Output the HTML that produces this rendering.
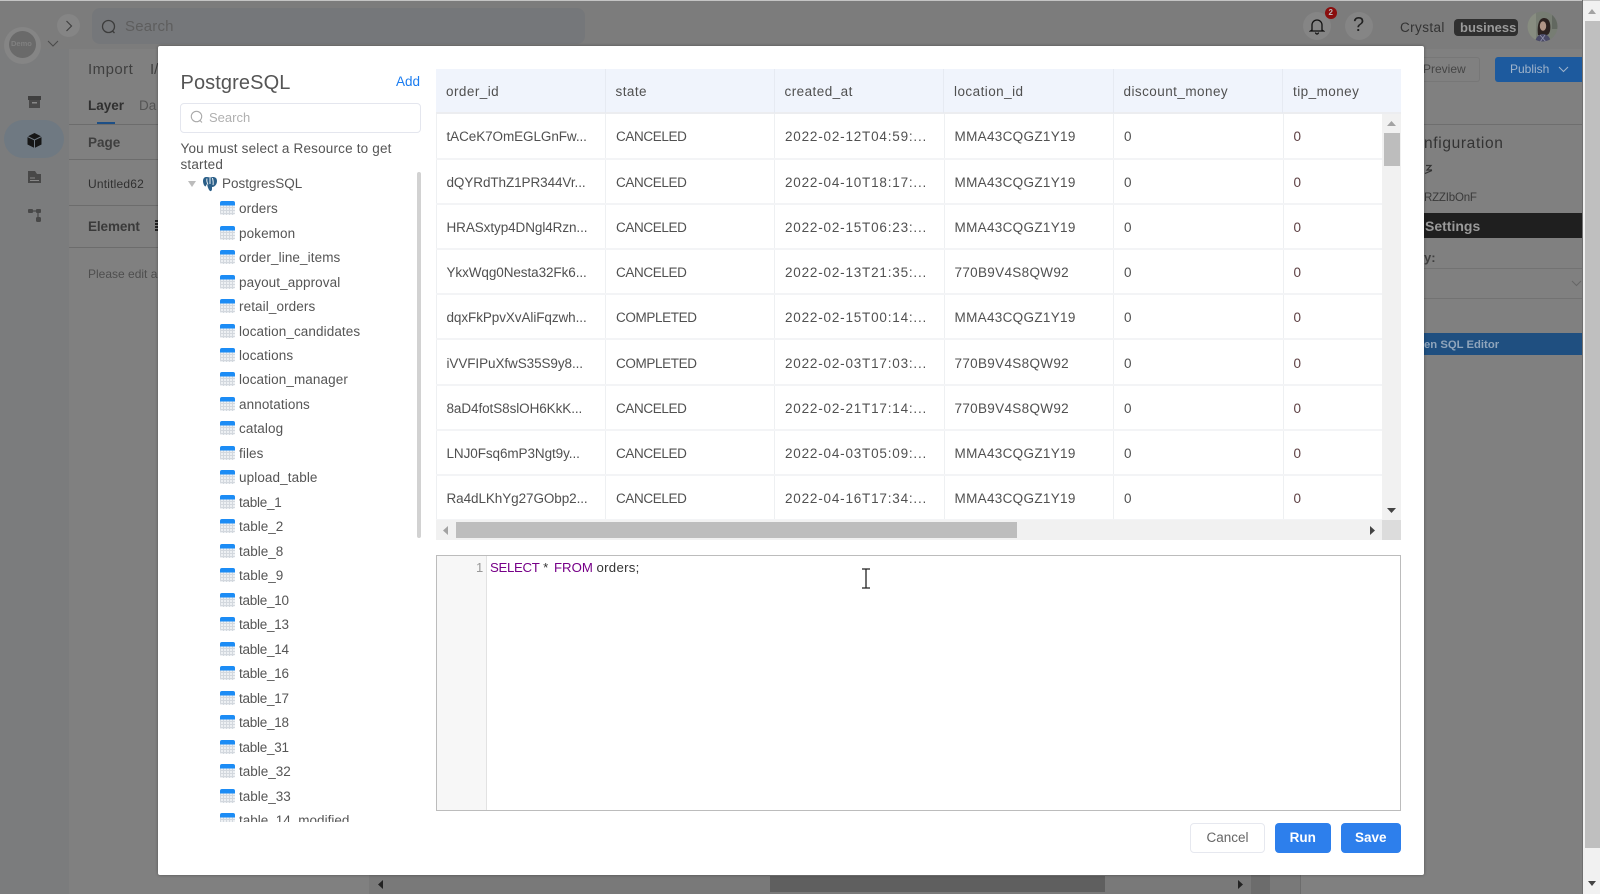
<!DOCTYPE html>
<html><head><meta charset="utf-8"><style>
*{box-sizing:border-box}
html,body{margin:0;padding:0;width:1600px;height:894px;overflow:hidden;background:#808080}
body{font-family:"Liberation Sans",sans-serif;position:relative}
#w{position:absolute;left:0;top:0;width:1600px;height:894px;overflow:hidden;filter:blur(.35px)}
.a{position:absolute;white-space:nowrap;line-height:1}
.b{position:absolute}
.bgt{color:#3f3f3f}
.tr{height:24.49px;line-height:24.49px;padding-left:62px;position:relative;font-size:13.5px;color:#555;white-space:nowrap;letter-spacing:.1px}
.tr:before{content:"";position:absolute;left:43px;top:4px;width:15px;height:14px;border-radius:2px;background:linear-gradient(#1c8cf5 0,#1c8cf5 4.5px,transparent 4.5px),repeating-linear-gradient(90deg,#d3d8de 0,#d3d8de 1px,transparent 1px,transparent 3px),repeating-linear-gradient(#d3d8de 0,#d3d8de 1px,#edf0f3 1px,#edf0f3 3px)}
.n1{letter-spacing:-.25px}.n2{letter-spacing:0}
table{border-collapse:collapse;table-layout:fixed;position:absolute;left:435.5px;top:113.5px;width:946.5px;font-size:13.5px;color:#505050}
td{height:45.2px;padding:2px 0 0 10px;border-right:1px solid #eef0f2;border-bottom:2px solid #f3f4f6;white-space:nowrap;overflow:hidden}
td:first-child{border-left:1px solid #eef0f2;padding-left:10px;letter-spacing:-.08px}
td:nth-child(2){letter-spacing:-.38px}
td:nth-child(3){letter-spacing:.8px}
td:nth-child(4){letter-spacing:.32px}
td:last-child{border-right:0;color:#5c3f42}
.h{position:absolute;top:69px;height:44px;line-height:45px;font-size:13.5px;color:#505050;padding-left:10px;border-right:1px solid #e6eaf2;letter-spacing:.45px}
</style></head><body><div id="w">
<!-- background app -->
<div class="b" style="left:0;top:0;width:1600px;height:1px;background:#c4c4c4"></div>
<div class="b" style="left:0;top:1px;width:69px;height:893px;background:#7b7c7d"></div>
<div class="b" style="left:0;top:1px;width:1583px;height:48px;background:#7c7c7c"></div>
<div class="b" style="left:4px;top:27px;width:37px;height:37px;border-radius:50%;background:#858585"></div>
<div class="b" style="left:9px;top:31px;width:27px;height:27px;border-radius:50%;background:#6a6a6a"></div>
<div class="a" style="left:11px;top:40px;font-size:7.5px;font-weight:bold;color:#808080">Demo</div>
<svg class="b" style="left:47px;top:40px" width="12" height="8"><path d="M1 1l5 5 5-5" fill="none" stroke="#4a4a4a" stroke-width="1"/></svg>
<div class="b" style="left:57px;top:14px;width:23px;height:23px;border-radius:50%;background:#858585"></div>
<svg class="b" style="left:65px;top:20px" width="8" height="12"><path d="M1.5 1l5 5-5 5" fill="none" stroke="#404040" stroke-width="1.2"/></svg>
<div class="b" style="left:92px;top:8px;width:493px;height:36px;border-radius:8px;background:#75777a"></div>
<svg class="b" style="left:101px;top:19px" width="16" height="16"><circle cx="7.5" cy="7.5" r="6" fill="none" stroke="#3c3c3c" stroke-width="1.3"/><path d="M11.5 12l2 2" stroke="#3c3c3c" stroke-width="1.3"/></svg>
<div class="a" style="left:125px;top:19px;font-size:15px;color:#5e5e5e;letter-spacing:.2px">Search</div>
<div class="a bgt" style="left:88px;top:62px;font-size:15px;letter-spacing:.45px">Import</div>
<div class="a bgt" style="left:150px;top:62px;font-size:15px">I/</div>
<div class="a" style="left:88px;top:99px;font-size:13.5px;font-weight:bold;color:#303030">Layer</div>
<div class="a" style="left:139px;top:99px;font-size:13.5px;color:#555">Da</div>
<div class="b" style="left:97px;top:122px;width:18px;height:2px;background:#1d4f86"></div>
<div class="b" style="left:69px;top:124px;width:90px;height:1px;background:#6c6c6c"></div>
<div class="a bgt" style="left:88px;top:136px;font-size:13.5px;font-weight:bold">Page</div>
<div class="b" style="left:69px;top:159px;width:90px;height:1px;background:#6c6c6c"></div>
<div class="a" style="left:88px;top:178px;font-size:12px;color:#303030;letter-spacing:.2px">Untitled62</div>
<div class="b" style="left:69px;top:205px;width:90px;height:1px;background:#6c6c6c"></div>
<div class="a" style="left:88px;top:220px;font-size:13.5px;font-weight:bold;color:#3a3a3a;letter-spacing:-.1px">Element</div>
<div class="b" style="left:155px;top:220px;width:2.5px;height:12px;background:repeating-linear-gradient(#222 0,#222 2px,transparent 2px,transparent 3px)"></div>
<div class="b" style="left:69px;top:247px;width:90px;height:1px;background:#6c6c6c"></div>
<div class="a" style="left:88px;top:268px;font-size:12px;color:#4e4e4e">Please edit a</div>
<!-- sidebar icons -->
<div class="b" style="left:4px;top:120px;width:60px;height:38px;border-radius:19px;background:#6f7982"></div>
<svg class="b" style="left:26px;top:94px" width="16" height="16"><rect x="2" y="2" width="13" height="4" fill="#3f3f3f"/><rect x="3" y="6" width="11" height="8" fill="#4a4a4a"/><rect x="6" y="8" width="5" height="1.5" fill="#888"/></svg>
<svg class="b" style="left:26px;top:132px" width="17" height="17"><path d="M8.5 1L15.5 4.5V12.5L8.5 16L1.5 12.5V4.5Z" fill="#161616"/><path d="M1.500 4.500L8.500 8L15.500 4.500M8.500 8V16" fill="none" stroke="#6f7982" stroke-width="1"/></svg>
<svg class="b" style="left:26px;top:169px" width="16" height="16"><path d="M2 2h7l2 3h4v9H2z" fill="#484848"/><path d="M4 9h5M4 11.500h9" stroke="#888" stroke-width="1"/></svg>
<svg class="b" style="left:26px;top:207px" width="16" height="16"><rect x="2" y="2" width="5" height="4" rx="1" fill="#484848"/><rect x="10" y="2" width="5" height="4" rx="1" fill="#484848"/><rect x="10" y="10" width="5" height="5" rx="1.500" fill="#484848"/><path d="M7 4h3M12 6v4" stroke="#484848" stroke-width="1.200"/></svg>
<!-- top right -->
<div class="b" style="left:1303px;top:12px;width:28px;height:28px;border-radius:50%;background:#858585"></div>
<div class="b" style="left:1345px;top:12px;width:28px;height:28px;border-radius:50%;background:#858585"></div>
<svg class="b" style="left:1309px;top:17px" width="16" height="18"><path d="M3 13V8a5 5 0 0 1 10 0v5l1.500 1h-13z" fill="none" stroke="#111" stroke-width="1.300"/><path d="M6.500 15.500a1.500 1.500 0 0 0 3 0" fill="none" stroke="#111" stroke-width="1.200"/></svg>
<div class="b" style="left:1325px;top:7px;width:12px;height:12px;border-radius:50%;background:#8a0e0e"></div>
<div class="a" style="left:1328.500px;top:9px;font-size:8px;font-weight:bold;color:#bbb">2</div>
<div class="a" style="left:1353px;top:15px;font-size:20px;color:#222">?</div>
<div class="a" style="left:1400px;top:21px;font-size:13.500px;color:#333;letter-spacing:.4px">Crystal</div>
<div class="b" style="left:1454px;top:19px;width:64px;height:17px;border-radius:4px;background:#2f2f2f"></div>
<div class="a" style="left:1460px;top:21px;font-size:13px;font-weight:bold;color:#9a9a9a">business</div>
<svg class="b" style="left:1527px;top:11px" width="31" height="31"><defs><clipPath id="av"><circle cx="15.500" cy="15.500" r="15"/></clipPath></defs><g clip-path="url(#av)"><rect width="31" height="31" fill="#777d73"/><rect x="0" y="0" width="9" height="31" fill="#878c80"/><rect x="25" y="4" width="6" height="14" fill="#626860"/><path d="M11 24c-1-7 0-17 6-17s7 7 6 13c-1 3-2 4-4 4z" fill="#2c2220"/><ellipse cx="16" cy="15" rx="3.200" ry="4.800" fill="#b09586"/><path d="M8 31c1-5 4-8 8-8s7 3 8 8z" fill="#4a4a66"/><path d="M13 24l6 7M18 24l-5 7" stroke="#9a9ab4" stroke-width=".7"/></g></svg>
<div class="b" style="left:1424px;top:57px;width:56px;height:25px;border:1px solid #777;border-left:0;border-radius:0 3px 3px 0"></div>
<div class="a" style="left:1423px;top:63px;font-size:12px;color:#454545">Preview</div>
<div class="b" style="left:1495px;top:57px;width:87px;height:25px;border-radius:3px 0 0 3px;background:#1d5a9e"></div>
<div class="a" style="left:1510px;top:63px;font-size:12px;color:#a0b4cb">Publish</div>
<svg class="b" style="left:1558px;top:66px" width="11" height="7"><path d="M1 1l4.500 4.500L10 1" fill="none" stroke="#a0b4cb" stroke-width="1"/></svg>
<div class="b" style="left:1424px;top:124px;width:158px;height:1px;background:#6e6e6e"></div>
<div class="a" style="left:1424px;top:136px;font-size:15.500px;letter-spacing:.65px;color:#333">nfiguration</div>
<svg class="b" style="left:1424px;top:164px" width="9" height="11"><path d="M2 1.500h5L3 6h5M1 9.500l7-3" fill="none" stroke="#333" stroke-width="1.200"/></svg>
<div class="a" style="left:1424px;top:193px;font-size:11.500px;color:#3a3a3a;letter-spacing:-.2px">RZZIbOnF</div>
<div class="b" style="left:1424px;top:213px;width:158px;height:25px;background:#1f1f1f"></div>
<div class="a" style="left:1425px;top:219px;font-size:14px;font-weight:bold;color:#999">Settings</div>
<div class="a bgt" style="left:1424px;top:251px;font-size:13px;font-weight:bold">y:</div>
<div class="b" style="left:1424px;top:268px;width:158px;height:1px;background:#727272"></div>
<svg class="b" style="left:1571px;top:280px" width="11" height="7"><path d="M1 1l4.500 4.500L10 1" fill="none" stroke="#666" stroke-width="1"/></svg>
<div class="b" style="left:1424px;top:298px;width:158px;height:1px;background:#727272"></div>
<div class="b" style="left:1424px;top:333px;width:158px;height:22px;background:#1f4f80"></div>
<div class="a" style="left:1424px;top:339.500px;font-size:11.300px;font-weight:bold;color:#90a5bb">en SQL Editor</div>
<!-- page scrollbar -->
<div class="b" style="left:1582px;top:0;width:1px;height:894px;background:#6e6e6e"></div>
<div class="b" style="left:1583px;top:1px;width:17px;height:893px;background:#f1f1f1"></div>
<div class="b" style="left:1585px;top:21px;width:15px;height:827px;background:#bfbfbf"></div>
<svg class="b" style="left:1587px;top:8px" width="10" height="7"><path d="M1 6h8L5 1z" fill="#a3a3a3"/></svg>
<svg class="b" style="left:1587px;top:880px" width="10" height="7"><path d="M1 1h8L5 6z" fill="#444"/></svg>
<!-- bottom scrollbar -->
<div class="b" style="left:369px;top:875px;width:931px;height:19px;background:#797979"></div>
<div class="b" style="left:770px;top:876px;width:335px;height:16px;background:#5f5f5f"></div>
<div class="b" style="left:1251px;top:875px;width:19px;height:19px;background:#6c6c6c"></div>
<div class="b" style="left:1300px;top:875px;width:1px;height:19px;background:#6c6c6c"></div>
<svg class="b" style="left:377px;top:879px" width="7" height="11"><path d="M6 1v9L1 5.500z" fill="#222"/></svg>
<svg class="b" style="left:1237px;top:879px" width="7" height="11"><path d="M1 1v9l5-4.500z" fill="#222"/></svg>

<!-- modal -->
<div class="b" style="left:157.500px;top:46px;width:1266.500px;height:829px;background:#fff;border-radius:2px;box-shadow:0 0 3px rgba(0,0,0,.35)"></div>
<div class="a" style="left:180.500px;top:73px;font-size:20px;color:#555;letter-spacing:.1px">PostgreSQL</div>
<div class="a" style="left:396px;top:75px;font-size:13.500px;color:#1a7cf0">Add</div>
<div class="b" style="left:180px;top:103px;width:241px;height:30px;border:1px solid #e4e6ee;border-radius:4px"></div>
<svg class="b" style="left:190px;top:110px" width="14" height="14"><circle cx="6.500" cy="6.500" r="5.200" fill="none" stroke="#aaa" stroke-width="1.100"/><path d="M10 10.500l2 2" stroke="#aaa" stroke-width="1.100"/></svg>
<div class="a" style="left:209px;top:110.500px;font-size:13px;color:#b0b0b0">Search</div>
<div class="b" style="left:180.500px;top:141px;width:240px;font-size:13.500px;line-height:16px;color:#555;letter-spacing:.18px">You must select a Resource to get started</div>
<svg class="b" style="left:188px;top:181px" width="8" height="6"><path d="M0 0h8L4 6z" fill="#bcbcbc"/></svg>
<svg class="b" style="left:202px;top:176px" width="16" height="16" viewBox="0 0 16 16"><path d="M4 1c-2 0-3 2-3 4s1 5 2.500 5.500L5 8c.5 2 1 5 3 7 1 .5 2-.5 2-2v-2c3 0 5-3 5-6s-2-4-4-4c-1 0-2 .3-3 .8C7 1 5 1 4 1z" fill="#2b5f88"/><path d="M5 2.500c-.5 2 0 4 1 6M10.500 2c.5 2 1 4 .5 7M8 2v6" fill="none" stroke="#fff" stroke-width=".9"/></svg>
<div class="a" style="left:222px;top:177px;font-size:13.500px;color:#555">PostgresSQL</div>
<div class="b" style="left:417px;top:172px;width:4px;height:366px;background:#d2d2d2;border-radius:2px"></div>
<div class="b" style="left:177px;top:197.100px;width:240px;height:624.700px;overflow:hidden">
<div class="tr">orders</div><div class="tr">pokemon</div><div class="tr">order_line_items</div><div class="tr">payout_approval</div><div class="tr">retail_orders</div><div class="tr">location_candidates</div><div class="tr">locations</div><div class="tr">location_manager</div><div class="tr">annotations</div><div class="tr">catalog</div><div class="tr">files</div><div class="tr">upload_table</div><div class="tr n1">table_1</div><div class="tr n2">table_2</div><div class="tr n2">table_8</div><div class="tr n2">table_9</div><div class="tr n1">table_10</div><div class="tr n1">table_13</div><div class="tr n1">table_14</div><div class="tr n1">table_16</div><div class="tr n1">table_17</div><div class="tr n1">table_18</div><div class="tr n1">table_31</div><div class="tr n2">table_32</div><div class="tr n2">table_33</div><div class="tr n2">table_14_modified</div>
</div>
<!-- table header -->
<div class="b" style="left:436px;top:69px;width:965px;height:44.500px;background:#f0f4fc;border-bottom:2px solid #ecedf0"></div>
<div class="h" style="left:436px;width:169.500px">order_id</div>
<div class="h" style="left:605.500px;width:169px">state</div>
<div class="h" style="left:774.500px;width:169.500px">created_at</div>
<div class="h" style="left:944px;width:169.500px">location_id</div>
<div class="h" style="left:1113.500px;width:169.500px">discount_money</div>
<div class="h" style="left:1283px;width:118px;border-right:0">tip_money</div>
<table>
<colgroup><col style="width:169.500px"><col style="width:169px"><col style="width:169.500px"><col style="width:169.500px"><col style="width:169.500px"><col style="width:99px"></colgroup>
<tr><td>tACeK7OmEGLGnFw...</td><td>CANCELED</td><td>2022-02-12T04:59:...</td><td>MMA43CQGZ1Y19</td><td>0</td><td>0</td></tr>
<tr><td>dQYRdThZ1PR344Vr...</td><td>CANCELED</td><td>2022-04-10T18:17:...</td><td>MMA43CQGZ1Y19</td><td>0</td><td>0</td></tr>
<tr><td>HRASxtyp4DNgl4Rzn...</td><td>CANCELED</td><td>2022-02-15T06:23:...</td><td>MMA43CQGZ1Y19</td><td>0</td><td>0</td></tr>
<tr><td>YkxWqg0Nesta32Fk6...</td><td>CANCELED</td><td>2022-02-13T21:35:...</td><td>770B9V4S8QW92</td><td>0</td><td>0</td></tr>
<tr><td>dqxFkPpvXvAliFqzwh...</td><td>COMPLETED</td><td>2022-02-15T00:14:...</td><td>MMA43CQGZ1Y19</td><td>0</td><td>0</td></tr>
<tr><td>iVVFIPuXfwS35S9y8...</td><td>COMPLETED</td><td>2022-02-03T17:03:...</td><td>770B9V4S8QW92</td><td>0</td><td>0</td></tr>
<tr><td>8aD4fotS8slOH6KkK...</td><td>CANCELED</td><td>2022-02-21T17:14:...</td><td>770B9V4S8QW92</td><td>0</td><td>0</td></tr>
<tr><td>LNJ0Fsq6mP3Ngt9y...</td><td>CANCELED</td><td>2022-04-03T05:09:...</td><td>MMA43CQGZ1Y19</td><td>0</td><td>0</td></tr>
<tr><td>Ra4dLKhYg27GObp2...</td><td>CANCELED</td><td>2022-04-16T17:34:...</td><td>MMA43CQGZ1Y19</td><td>0</td><td>0</td></tr>
</table>
<!-- table scrollbars -->
<div class="b" style="left:1382px;top:113.500px;width:19px;height:406.500px;background:#f1f1f1"></div>
<div class="b" style="left:1383.500px;top:133px;width:16.500px;height:33px;background:#bdbdbd"></div>
<svg class="b" style="left:1387px;top:120px" width="9" height="7"><path d="M0 6h9L4.500 1z" fill="#a3a3a3"/></svg>
<svg class="b" style="left:1387px;top:507px" width="9" height="7"><path d="M0 1h9L4.500 6z" fill="#444"/></svg>
<div class="b" style="left:436px;top:520px;width:946px;height:20px;background:#f1f1f1"></div>
<div class="b" style="left:456px;top:522px;width:561px;height:16px;background:#bdbdbd"></div>
<div class="b" style="left:1382px;top:520px;width:19px;height:20px;background:#dcdcdc"></div>
<svg class="b" style="left:442px;top:526px" width="7" height="9"><path d="M6 0v9L1 4.500z" fill="#a3a3a3"/></svg>
<svg class="b" style="left:1369px;top:526px" width="7" height="9"><path d="M1 0v9l5-4.500z" fill="#444"/></svg>
<!-- editor -->
<div class="b" style="left:436px;top:555px;width:965px;height:256px;border:1px solid #bcbcbc;background:#fff"></div>
<div class="b" style="left:437px;top:556px;width:50px;height:254px;background:#f7f7f7;border-right:1px solid #e2e2e2"></div>
<div class="a" style="left:476px;top:561px;font-size:13px;color:#999">1</div>
<div class="a" style="left:490px;top:561px;font-size:13.200px;color:#333"><span style="color:#770088;letter-spacing:-.3px">SELECT</span> * <span style="color:#770088;margin-left:2px">FROM</span> <span style="letter-spacing:.3px">orders;</span></div>
<svg class="b" style="left:860px;top:568px" width="12" height="21"><path d="M2 1h8M6 1v19M2 20h8" fill="none" stroke="#222" stroke-width="1.300"/></svg>
<!-- buttons -->
<div class="b" style="left:1190px;top:823px;width:75px;height:29.500px;border:1px solid #e6e8ef;border-radius:4px;background:#fff;line-height:27px;text-align:center;font-size:13.500px;color:#666">Cancel</div>
<div class="b" style="left:1274.500px;top:823px;width:56.500px;height:29.500px;border-radius:4px;background:#2d7fec;line-height:29px;text-align:center;font-size:13.500px;font-weight:bold;color:#fff">Run</div>
<div class="b" style="left:1340.500px;top:823px;width:60.500px;height:29.500px;border-radius:4px;background:#2d7fec;line-height:29px;text-align:center;font-size:13.500px;font-weight:bold;color:#fff">Save</div>
</div></body></html>
